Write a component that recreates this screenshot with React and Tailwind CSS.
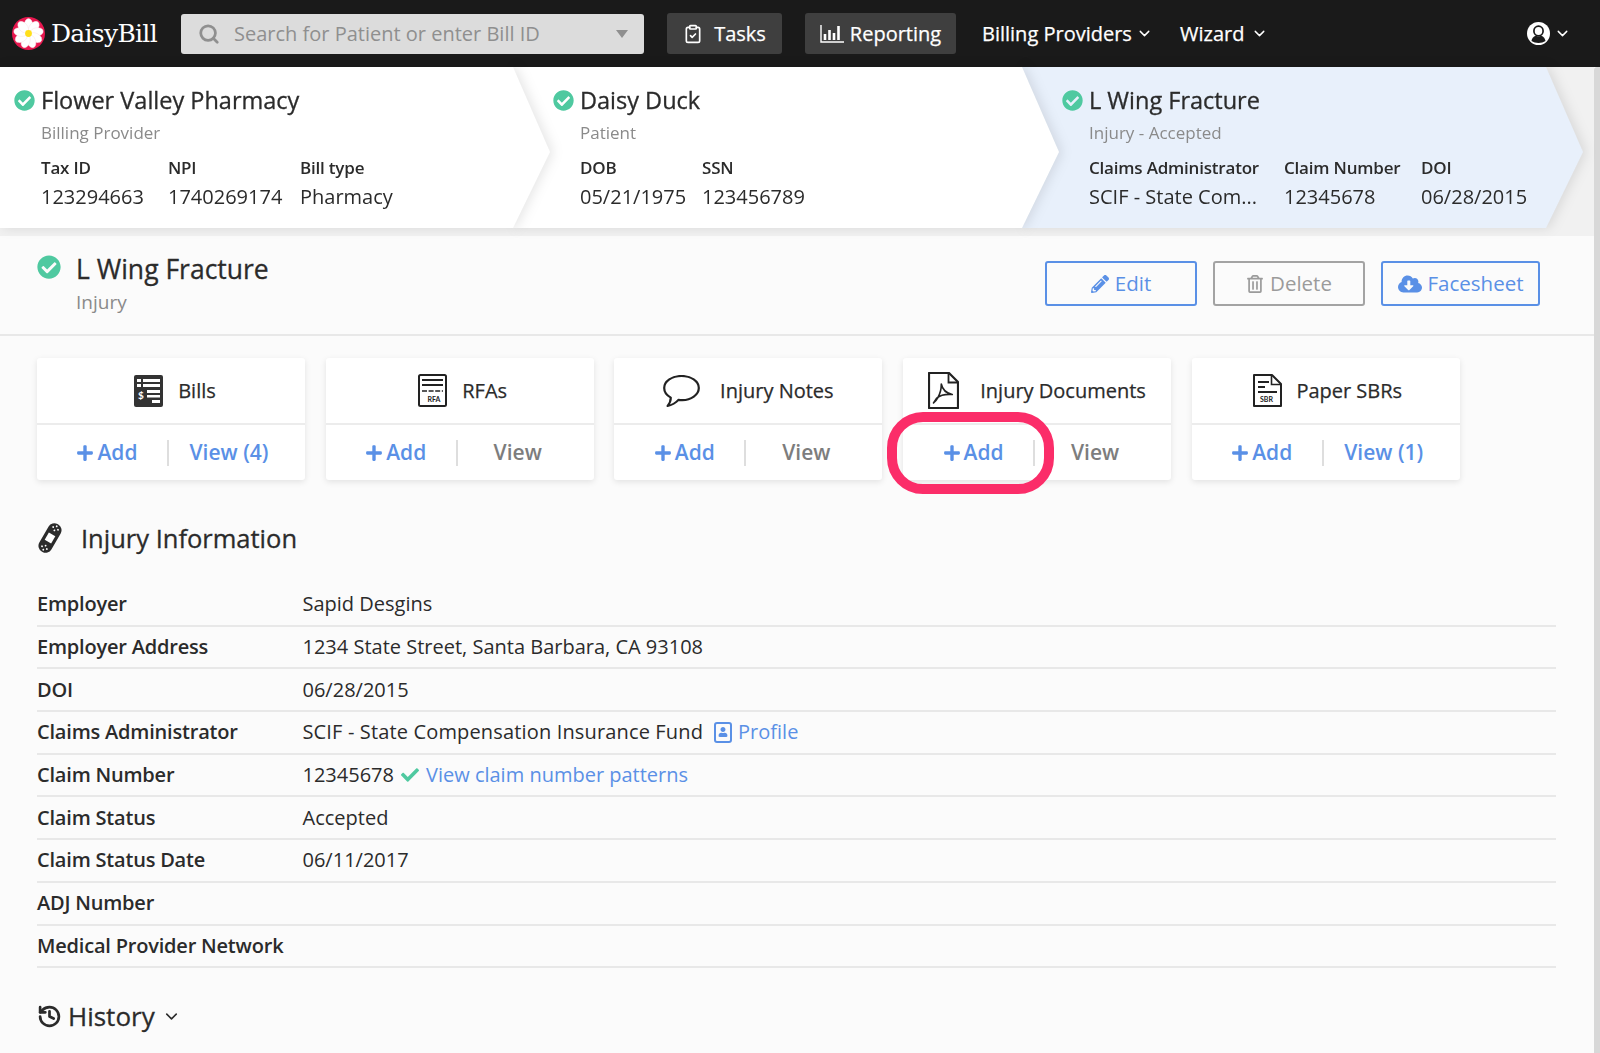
import React from 'react';
import { FaCheckCircle, FaPencilAlt, FaRegTrashAlt, FaCloudDownloadAlt, FaPlus, FaUser, FaCheck } from 'react-icons/fa';
import { Search, ChevronDown, ClipboardCheck, History } from 'lucide-react';

const Logo = () => (
  <svg width="33" height="33" viewBox="0 0 33 33">
    <circle cx="16.5" cy="16.5" r="16.5" fill="#e8174f" />
    {[0, 40, 80, 120, 160, 200, 240, 280, 320].map(a => (
      <ellipse key={a} cx="16.5" cy="8.2" rx="4.3" ry="6.6" fill="#fff" stroke="#f6dbe0" strokeWidth="0.4" transform={`rotate(${a} 16.5 16.5)`} />
    ))}
    <circle cx="16.5" cy="16.5" r="3.4" fill="#ffdf1a" />
  </svg>
);

const UserIcon = () => (
  <svg width="23" height="23" viewBox="0 0 23 23">
    <circle cx="11.5" cy="11.5" r="11.5" fill="#fff" />
    <ellipse cx="11.5" cy="9" rx="4.6" ry="4.9" fill="#fff" stroke="#1a1a1a" strokeWidth="1.7" />
    <path d="M4.5 19c.6-3.6 3-4.8 4.4-5.2 1.6 1 3.6 1 5.2 0 1.4.4 3.8 1.6 4.4 5.2-3.6 2.6-10.4 2.6-14 0z" fill="#1a1a1a" />
  </svg>
);

const BarsIcon = () => (
  <svg width="24" height="18" viewBox="0 0 24 18" fill="none" stroke="#fff">
    <path d="M1 0v17h23" strokeWidth="1.4" />
    <path d="M5 15V9M9.5 15V5M14 15V8M18.5 15V1" strokeWidth="2.6" />
  </svg>
);

const BillsIcon = () => (
  <svg width="29" height="32" viewBox="0 0 29 32">
    <rect width="29" height="32" rx="2" fill="#333" />
    <path d="M3 4h4v3H3zM9 4h17v3H9zM3 9h4v3H3zM9 9h17v3H9zM13 15h13v3H13zM13 20h13v2.6H13zM18 25h8v3h-8z" fill="#fff" />
    <text x="4" y="24" fontSize="10" fontWeight="700" fill="#fff" fontFamily="Lato">$</text>
  </svg>
);

const RfaIcon = () => (
  <svg width="29" height="33" viewBox="0 0 29 33" fill="none" stroke="#222">
    <rect x="1" y="1" width="27" height="31" rx="1.5" strokeWidth="2" />
    <path d="M4 6h21M4 11h21" strokeWidth="2" />
    <path d="M4 17h21" strokeWidth="1.6" strokeDasharray="5 1.6" />
    <text x="9.5" y="28" fontSize="7" fontWeight="700" fill="#222" stroke="none" fontFamily="Lato">RFA</text>
  </svg>
);

const BubbleIcon = () => (
  <svg width="37" height="32" viewBox="0 0 37 32" fill="none" stroke="#222" strokeWidth="2.2" strokeLinejoin="round">
    <path d="M18.5 1C9 1 1.2 6.2 1.2 13c0 3.9 2.6 7.4 6.6 9.6 0 3-1.2 6-3.2 8.3 3.8-.6 8.8-3.6 10.8-6 1.3.2 2.6.3 3.9.3C28 25 35.8 19.8 35.8 13S28 1 18.5 1z" />
  </svg>
);

const PdfIcon = () => (
  <svg width="31" height="37" viewBox="0 0 31 37" fill="none" stroke="#222">
    <path d="M1 1h20l9 9v26H1z" strokeWidth="2.2" strokeLinejoin="round" />
    <path d="M20.5 1v9.5H30" strokeWidth="1.8" />
    <path d="M5.5 31c3.5-3 6-8 7-12 .5-2 .8-5 .8-7 1 5 4 9 11 10.5-5-.4-12 .6-15.5 3.5L5.5 31z" strokeWidth="1.6" strokeLinejoin="round" />
  </svg>
);

const SbrIcon = () => (
  <svg width="29" height="33" viewBox="0 0 29 33" fill="none" stroke="#222">
    <path d="M1 1h18l9 9v22H1z" strokeWidth="2" strokeLinejoin="round" />
    <path d="M18.5 1v9.5H28" strokeWidth="1.6" />
    <path d="M5 8h11M5 13h7M5 18h19" strokeWidth="2" />
    <text x="7" y="28" fontSize="7" fontWeight="700" fill="#222" stroke="none" fontFamily="Lato">SBR</text>
  </svg>
);

const BandageIcon = () => (
  <svg width="26" height="32" viewBox="0 0 28 32">
    <g transform="rotate(30 14 16)">
      <rect x="6.5" y="-1" width="15" height="34" rx="7" fill="#2b2b2b" />
      <rect x="10" y="11.5" width="8" height="9" fill="#fff" />
      {[[11, 4], [14, 1.5], [17, 4], [14, 6.5], [11, 28], [14, 25.5], [17, 28], [14, 30.5]].map(([cx, cy]) => (
        <circle key={`${cx}-${cy}`} cx={cx} cy={cy} r="1" fill="#fff" />
      ))}
    </g>
  </svg>
);

const Badge = ({ size = 'text-[20px]' }) => <FaCheckCircle className={`${size} text-[#4fc9a0] shrink-0`} />;

const Stat = ({ label, value, className }) => (
  <div className={className}>
    <div className="text-[17px] leading-[24px] font-semibold tracking-[-0.2px]">{label}</div>
    <div className="mt-[5px] text-[20px] leading-[24px] whitespace-nowrap">{value}</div>
  </div>
);

const Crumb = ({ title, sub, stats, wrap, seg }) => (
  <div className={`relative drop-shadow-[3px_0_6px_rgba(0,0,0,0.1)] ${wrap}`}>
    <div className={`h-[161px] pt-[19px] ${seg}`}>
      <div className="flex items-center gap-[6px]">
        <Badge size="text-[21px]" />
        <span className="text-[23.5px] leading-[28px] font-medium [-webkit-text-stroke:0.3px_currentColor] whitespace-nowrap">{title}</span>
      </div>
      <div className="ml-[27px] mt-[7px] text-[17px] leading-[24px] text-[#8a8a8a]">{sub}</div>
      <div className="ml-[27px] mt-[11px] flex">
        {stats.map(s => <Stat key={s.label} {...s} />)}
      </div>
    </div>
  </div>
);

const Outline = ({ icon, label, className }) => (
  <button className={`h-[45px] flex items-center justify-center gap-[6px] rounded-[3px] border-2 text-[20.5px] font-medium ${className}`}>
    {icon}{label}
  </button>
);

const Tile = ({ icon, title, gap, view, ring }) => (
  <div className="relative w-[268px] h-[122px] rounded-[3px] bg-white shadow-[0_2px_6px_rgba(0,0,0,0.1)]">
    <div className={`h-[67px] flex items-center justify-center border-b-2 border-[#ececec] text-[20px] font-medium [-webkit-text-stroke:0.25px_currentColor] ${gap}`}>
      {icon}<span>{title}</span>
    </div>
    <div className="h-[55px] flex items-center text-[21px] font-semibold">
      <a className="w-[130px] pl-[10px] flex items-center justify-center gap-[3px] text-[#5a90e6]">
        <FaPlus className="text-[18px]" />Add
      </a>
      <span className="w-[2px] h-[26px] bg-[#dedede]" />
      <a className={`w-[120px] text-center ${view === 'View' ? 'text-[#7d7d7d]' : 'text-[#5a90e6]'}`}>{view}</a>
    </div>
    {ring && <div className="absolute left-[-16px] top-[54px] w-[167px] h-[82px] rounded-[36px] border-[10px] border-[#fb2d69]" />}
  </div>
);

const rows = [
  ['Employer', 'Sapid Desgins'],
  ['Employer Address', '1234 State Street, Santa Barbara, CA 93108'],
  ['DOI', '06/28/2015'],
  ['Claims Administrator', (
    <span className="flex items-center">
      <span className="tracking-[0.15px]">SCIF - State Compensation Insurance Fund</span>
      <span className="ml-[11px] mr-[6px] w-[18px] h-[21px] rounded-[3px] border-2 border-[#5a90e6] flex items-center justify-center">
        <FaUser className="text-[10px] text-[#5a90e6]" />
      </span>
      <a className="text-[#5a90e6]">Profile</a>
    </span>
  )],
  ['Claim Number', (
    <span className="flex items-center">
      12345678
      <FaCheck className="ml-[7px] mr-[7px] text-[18px] text-[#4fc9a0]" />
      <a className="text-[#5a90e6]">View claim number patterns</a>
    </span>
  )],
  ['Claim Status', 'Accepted'],
  ['Claim Status Date', '06/11/2017'],
  ['ADJ Number', ''],
  ['Medical Provider Network', ''],
];

export default function App() {
  return (
    <div className="h-[1053px] overflow-hidden bg-[#fbfbfb] font-['Open_Sans'] text-[#2b2b2b]">
      {/* Top bar */}
      <div className="h-[67px] bg-[#1a1a1a] flex items-center text-white text-[20px] font-medium">
        <div className="ml-[12px] w-[169px] flex items-center gap-[6px]">
          <Logo />
          <span className="font-['DejaVu_Serif'] font-normal text-[25px] tracking-[-0.7px]">DaisyBill</span>
        </div>
        <div className="w-[463px] h-[40px] rounded-[3px] bg-[#dcdcdc] flex items-center text-[#8f8f8f] font-normal">
          <Search size={22} strokeWidth={3} className="ml-[17px]" />
          <span className="ml-[14px] flex-1">Search for Patient or enter Bill ID</span>
          <span className="mr-[16px] w-0 h-0 border-x-[6px] border-x-transparent border-t-[8px] border-t-[#8f8f8f]" />
        </div>
        <button className="ml-[23px] w-[115px] h-[41px] rounded-[3px] bg-[#3f3f3f] flex items-center justify-center gap-[11px] [-webkit-text-stroke:0.25px_currentColor]">
          <ClipboardCheck size={20} />Tasks
        </button>
        <button className="ml-[23px] w-[151px] h-[41px] rounded-[3px] bg-[#3f3f3f] flex items-center justify-center gap-[6px] [-webkit-text-stroke:0.25px_currentColor]">
          <BarsIcon />Reporting
        </button>
        <span className="ml-[26px] w-[150px] whitespace-nowrap [-webkit-text-stroke:0.25px_currentColor]">Billing Providers</span>
        <ChevronDown size={17} className="ml-[4px]" />
        <span className="ml-[27px] w-[66px] [-webkit-text-stroke:0.25px_currentColor]">Wizard</span>
        <ChevronDown size={17} className="ml-[5px]" />
        <span className="ml-auto"><UserIcon /></span>
        <ChevronDown size={17} className="ml-[4px] mr-[29px]" />
      </div>

      <div className="flex h-[986px]">
        <div className="w-[1594px] relative">
          {/* Breadcrumb */}
          <div className="h-[169px] bg-[#f1f1f1] flex">
            <Crumb
              wrap="z-30"
              seg="w-[550px] pl-[14px] bg-white [clip-path:polygon(0_0,513px_0,550px_85px,513px_100%,0_100%)]"
              title="Flower Valley Pharmacy"
              sub="Billing Provider"
              stats={[
                { label: 'Tax ID', value: '123294663', className: 'w-[127px]' },
                { label: 'NPI', value: '1740269174', className: 'w-[132px]' },
                { label: 'Bill type', value: 'Pharmacy' },
              ]}
            />
            <Crumb
              wrap="z-20 ml-[-37px]"
              seg="w-[546px] pl-[40px] bg-white [clip-path:polygon(0_0,509px_0,546px_85px,509px_100%,0_100%)]"
              title="Daisy Duck"
              sub="Patient"
              stats={[
                { label: 'DOB', value: '05/21/1975', className: 'w-[122px]' },
                { label: 'SSN', value: '123456789' },
              ]}
            />
            <Crumb
              wrap="z-10 ml-[-37px]"
              seg="w-[561px] pl-[40px] bg-[#e8f0fb] [clip-path:polygon(0_0,524px_0,561px_85px,524px_100%,0_100%)]"
              title="L Wing Fracture"
              sub="Injury - Accepted"
              stats={[
                { label: 'Claims Administrator', value: 'SCIF - State Com...', className: 'w-[195px]' },
                { label: 'Claim Number', value: '12345678', className: 'w-[137px]' },
                { label: 'DOI', value: '06/28/2015' },
              ]}
            />
          </div>

          {/* Page header */}
          <div className="h-[100px] border-b-2 border-[#e8e8e8] pl-[37px] pr-[54px] pt-[25px] flex justify-between">
            <div className="flex">
              <Badge size="text-[24px] mt-[-6px]" />
              <div className="ml-[15px] mt-[-9px]">
                <div className="text-[26.5px] leading-[34px] font-medium [-webkit-text-stroke:0.3px_currentColor]">L Wing Fracture</div>
                <div className="mt-[3px] text-[19px] leading-[26px] text-[#8a8a8a]">Injury</div>
              </div>
            </div>
            <div className="flex gap-[16px] h-[45px]">
              <Outline className="w-[152px] border-[#5a90e6] text-[#5a90e6]" icon={<FaPencilAlt className="text-[18px]" />} label="Edit" />
              <Outline className="w-[152px] border-[#a3a3a3] text-[#9b9b9b]" icon={<FaRegTrashAlt className="text-[18px]" />} label="Delete" />
              <Outline className="w-[159px] border-[#5a90e6] text-[#5a90e6]" icon={<FaCloudDownloadAlt className="text-[24px]" />} label="Facesheet" />
            </div>
          </div>

          {/* Tiles */}
          <div className="mt-[22px] ml-[37px] flex gap-[20.7px]">
            <Tile icon={<BillsIcon />} title="Bills" gap="gap-[15px] pl-[8px]" view="View (4)" />
            <Tile icon={<RfaIcon />} title="RFAs" gap="gap-[15px] pl-[6px]" view="View" />
            <Tile icon={<BubbleIcon />} title="Injury Notes" gap="gap-[20px]" view="View" />
            <Tile icon={<PdfIcon />} title="Injury Documents" gap="gap-[21px]" view="View" ring />
            <Tile icon={<SbrIcon />} title="Paper SBRs" gap="gap-[14px] pl-[4px]" view="View (1)" />
          </div>

          {/* Injury info */}
          <div className="mt-[38px] ml-[37px] h-[40px] flex items-center gap-[18px] text-[25.5px] font-medium [-webkit-text-stroke:0.3px_currentColor]">
            <BandageIcon />Injury Information
          </div>
          <div className="mt-[26px] ml-[37px] w-[1519px]">
            {rows.map(([label, value]) => (
              <div key={label} className="h-[42.7px] border-b-2 border-[#e8e8e8] flex items-center text-[20px]">
                <span className="w-[265.5px] font-semibold tracking-[-0.2px]">{label}</span>
                {value}
              </div>
            ))}
          </div>

          {/* History */}
          <div className="mt-[28px] ml-[37px] h-[40px] flex items-center text-[26px] font-medium [-webkit-text-stroke:0.3px_currentColor]">
            <History size={25} strokeWidth={2.6} className="mr-[6px]" />
            History
            <ChevronDown size={19} className="ml-[7px]" />
          </div>
        </div>
        {/* Scrollbar */}
        <div className="w-[6px] bg-[#d8d8d8] rounded-tl-[3px]" />
      </div>
    </div>
  );
}
